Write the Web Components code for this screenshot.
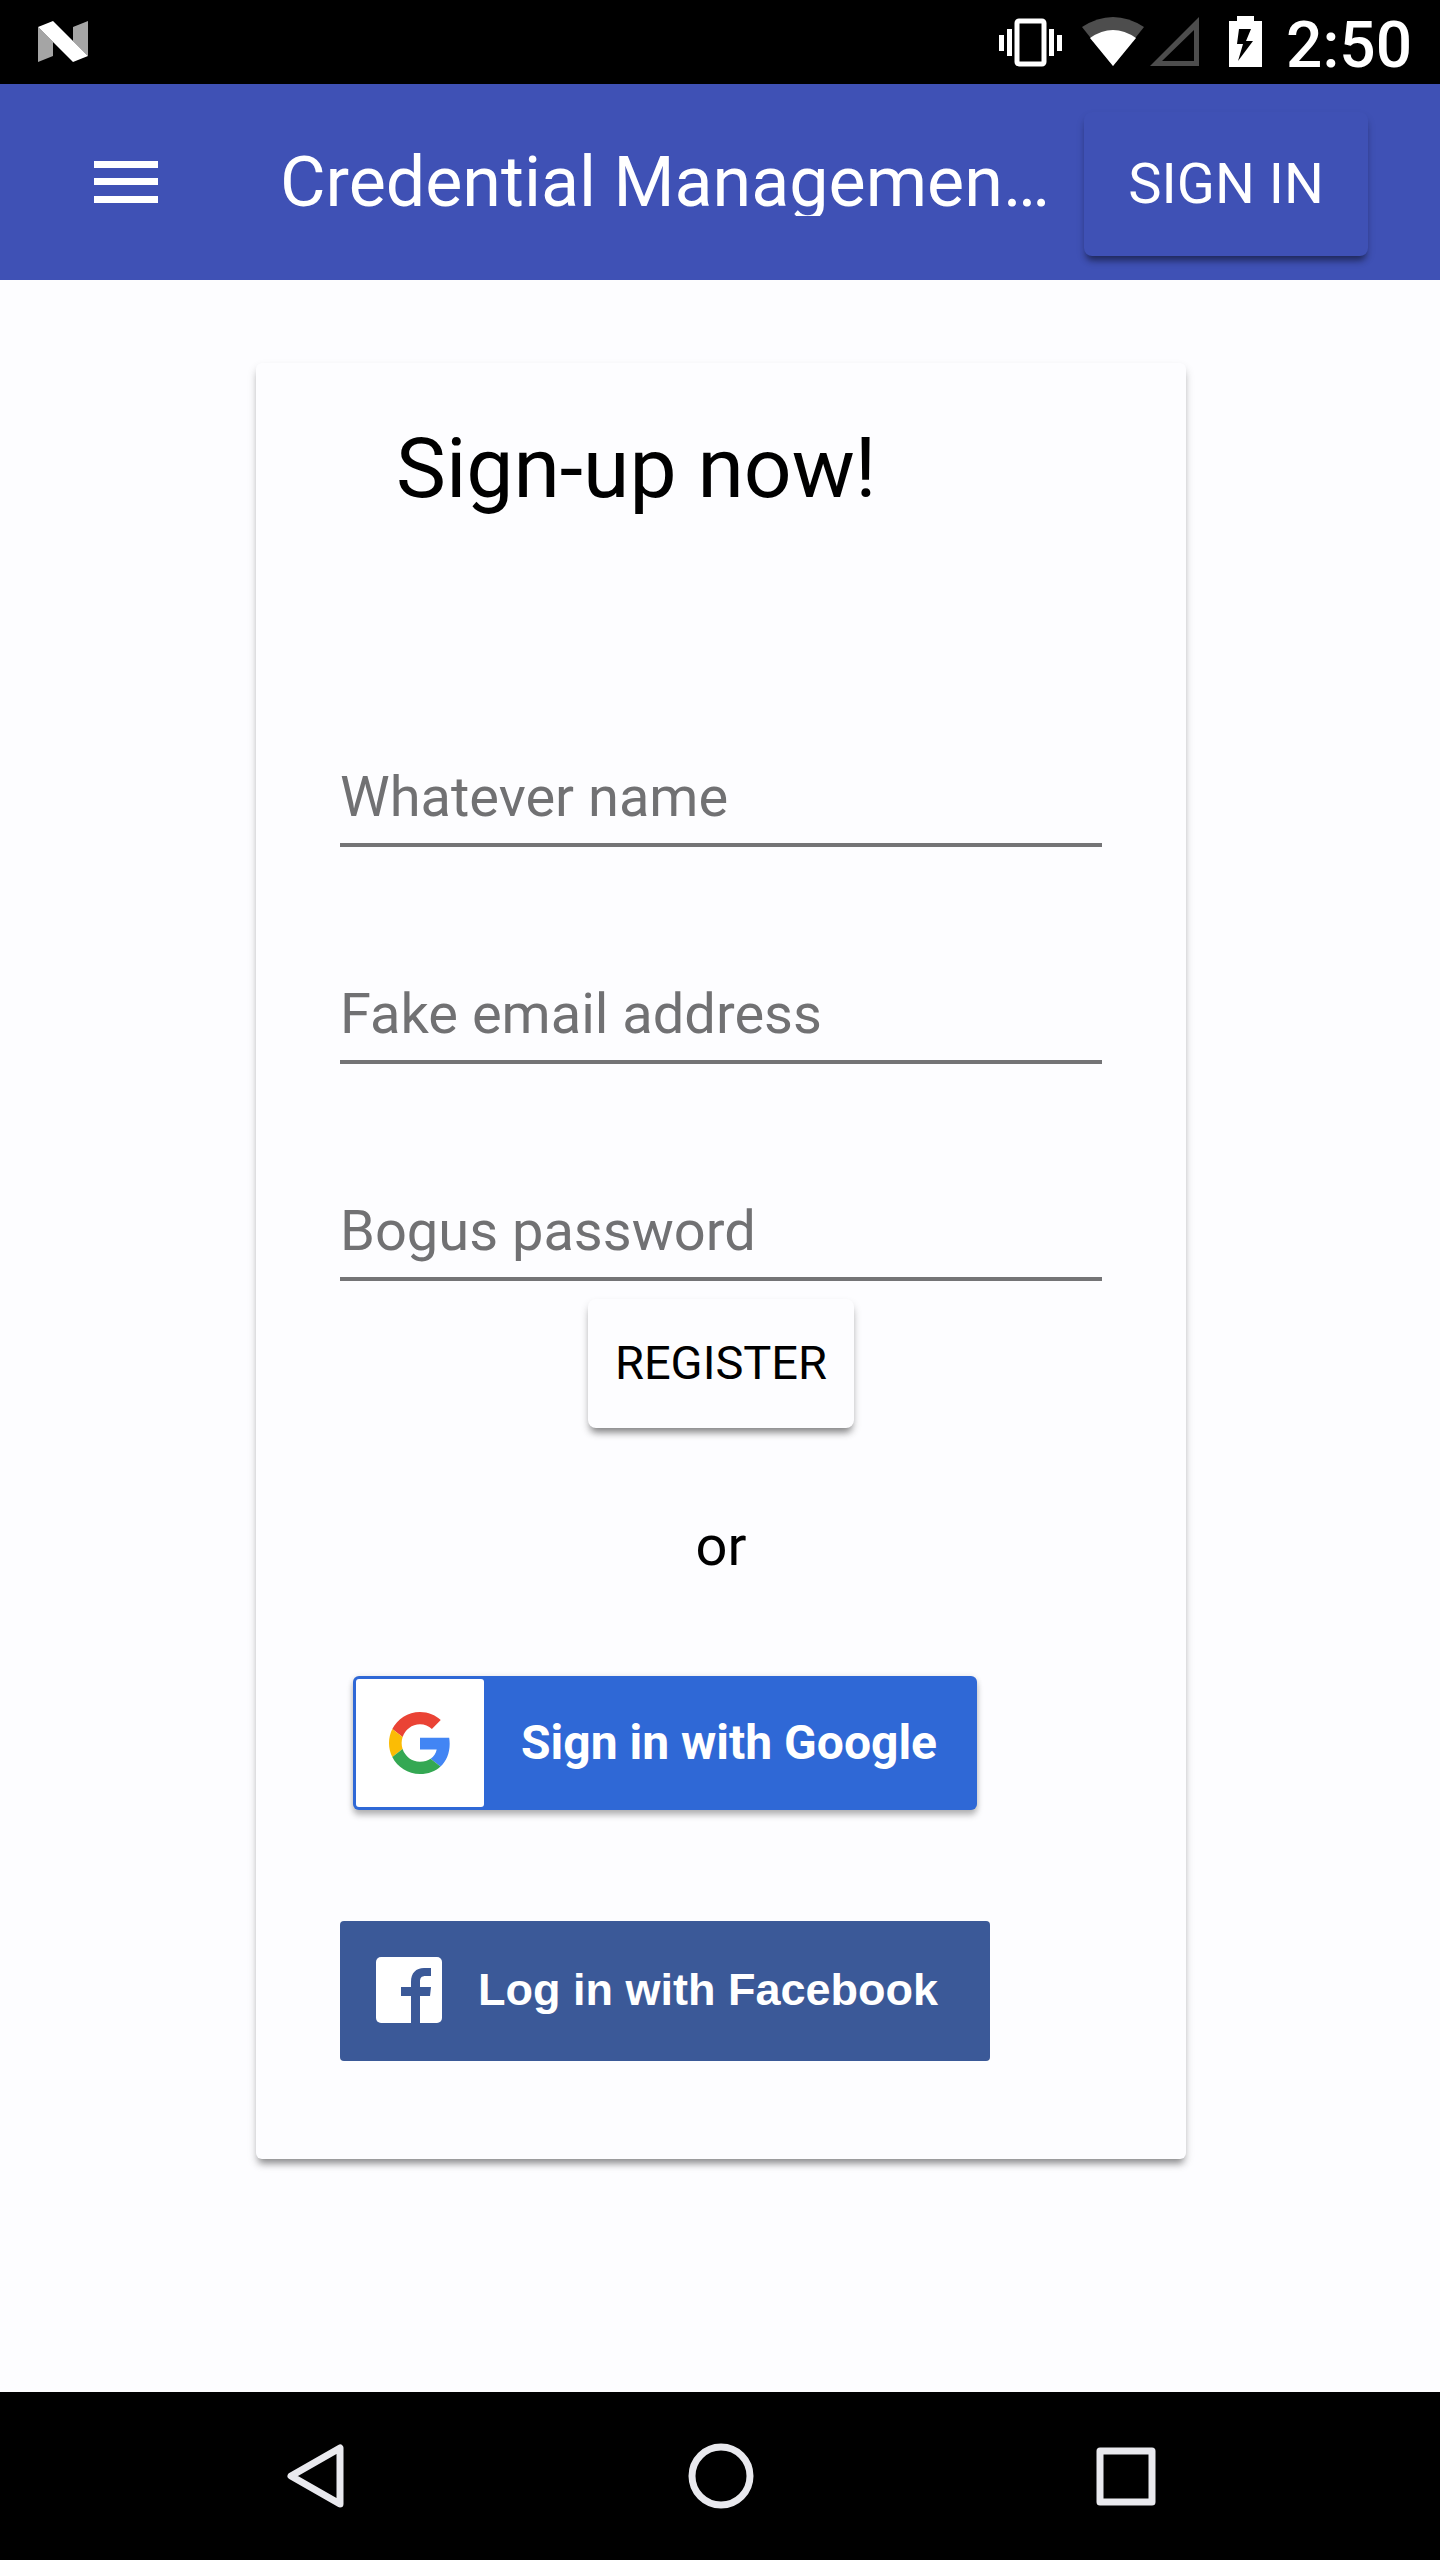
<!DOCTYPE html>
<html lang="en">
<head>
<meta charset="utf-8">
<meta name="viewport" content="width=device-width, initial-scale=1">
<title>Credential Management</title>
<style>
  html, body { margin: 0; }
  body { min-height: 100vh; display: flex; flex-direction: column; background: #fdfdff; color: #000; font-family: Roboto, "Liberation Sans", sans-serif; }
  main { flex: 1; padding: 83px 254px 84px 256px; }
</style>
</head>
<body>
<status-bar time="2:50"></status-bar>
<app-bar heading="Credential Managemen…">
  <raised-button slot="action" variant="bar">SIGN IN</raised-button>
</app-bar>
<main>
  <signup-card heading="Sign-up now!">
    <text-field type="text" name="name" placeholder="Whatever name"></text-field>
    <text-field type="email" name="email" placeholder="Fake email address"></text-field>
    <text-field type="password" name="password" placeholder="Bogus password"></text-field>
    <raised-button slot="submit">REGISTER</raised-button>
    <google-button slot="social">Sign in with Google</google-button>
    <facebook-button slot="social">Log in with Facebook</facebook-button>
  </signup-card>
</main>
<nav-bar></nav-bar>

<script>
const define = (name, html, setup) => customElements.define(name, class extends HTMLElement {
  connectedCallback() {
    if (this.shadowRoot) return;
    const template = document.createElement('template');
    template.innerHTML = html;
    this.attachShadow({ mode: 'open' }).append(template.content.cloneNode(true));
    if (setup) setup(this, this.shadowRoot);
  }
});

define('status-bar', `
<style>
  :host { display: flex; align-items: center; justify-content: space-between; height: 84px; padding: 0 28px 0 38px; background: #000; color: #fff; }
  .tray { display: flex; align-items: center; }
  svg { display: block; height: 84px; }
  time { font-size: 64px; line-height: 76px; font-weight: 500; padding-left: 12px; padding-top: 8px; }
</style>
<svg width="50" viewBox="0 0 50 84" aria-label="Android N">
  <path fill="#a5a5a5" d="M0 27l15 15v14L0 62zM35 27l15-6v35L35 41z"/>
  <path fill="#fff" d="M0 27l15-6 35 35-15 6z"/>
</svg>
<div class="tray">
  <svg width="83" viewBox="995 0 83 84" aria-label="Vibrate">
    <g fill="#fff"><path d="M999 35h5v16h-5zM1007 29h5v27h-5zM1049 29h5v27h-5zM1057 35h5v16h-5z"/></g>
    <rect x="1017" y="21" width="27" height="43" rx="2" fill="none" stroke="#fff" stroke-width="5"/>
  </svg>
  <svg width="70" viewBox="1078 0 70 84" aria-label="Wi-Fi">
    <path fill="#4d4d4d" d="M1082 27Q1113 7 1144 27L1113 66z"/>
    <path fill="#fff" d="M1090 38Q1113 22 1136 38L1113 66z"/>
  </svg>
  <svg width="70" viewBox="1148 0 70 84" aria-label="No signal">
    <path fill="#4d4d4d" fill-rule="evenodd" d="M1199 17v49h-49zM1194 30l-32 31h32z"/>
  </svg>
  <svg width="56" viewBox="1218 0 56 84" aria-label="Charging">
    <path fill="#fff" fill-rule="evenodd" d="M1237 16h17v5h8v46h-33V21h8zM1239 29l-2 15h6l-5 17 15-20h-7l5-12z"/>
  </svg>
  <time></time>
</div>`, (host, root) => { root.querySelector('time').textContent = host.getAttribute('time'); });

define('app-bar', `
<style>
  :host { display: flex; align-items: center; height: 196px; box-sizing: border-box; padding: 0 72px 0 84px; background: #3f51b5; color: #fff; }
  .menu { width: 84px; height: 84px; margin-right: 112px; padding: 0; border: 0; background: none; }
  .menu svg { display: block; }
  h1 { flex: 1; min-width: 0; margin: 0; font-size: 70px; line-height: 68px; font-weight: 400; white-space: nowrap; overflow: hidden; }
  slot { display: block; padding-top: 4px; }
</style>
<button class="menu" aria-label="Menu">
  <svg width="84" height="84" viewBox="0 0 84 84" fill="#fff"><path d="M10 21h64v7H10zM10 38h64v7H10zM10 56h64v7H10z"/></svg>
</button>
<h1></h1>
<slot name="action"></slot>`, (host, root) => { root.querySelector('h1').textContent = host.getAttribute('heading'); });

define('raised-button', `
<style>
  :host { display: block; }
  button { display: block; height: 129px; padding: 0 27px 2px; border: 0; border-radius: 8px; background: #fdfdff; color: #000; font: 400 47px/54px Roboto, sans-serif; box-shadow: 0 7px 7px -3px rgba(0,0,0,.38), 0 5px 8px rgba(0,0,0,.16); }
  :host([variant=bar]) button { height: 144px; padding: 0 44px; background: #3f51b5; color: #fff; font-size: 56px; box-shadow: 0 7px 6px -3px rgba(0,0,0,.42), 0 5px 8px rgba(0,0,0,.14); }
</style>
<button><slot></slot></button>`);

define('signup-card', `
<style>
  :host { display: block; padding: 56px 84px 98px; border-radius: 6px; background: #fdfdff; box-shadow: 0 7px 7px -3px rgba(0,0,0,.36), 0 5px 10px rgba(0,0,0,.15); }
  h2 { margin: 0 56px 242px; font-size: 84px; line-height: 100px; font-weight: 400; }
  .fields { display: flex; flex-direction: column; gap: 131px; }
  .submit { display: flex; justify-content: center; margin: 18px 0 82px; }
  p { margin: 0 0 94px; text-align: center; font-size: 56px; line-height: 72px; }
  .social { display: flex; flex-direction: column; align-items: flex-start; gap: 111px; }
</style>
<h2></h2>
<form>
  <div class="fields"><slot></slot></div>
  <div class="submit"><slot name="submit"></slot></div>
</form>
<p>or</p>
<div class="social"><slot name="social"></slot></div>`, (host, root) => { root.querySelector('h2').textContent = host.getAttribute('heading'); });

define('text-field', `
<style>
  :host { display: block; }
  input { display: block; box-sizing: border-box; width: 100%; height: 86px; margin: 0; padding: 0 0 10px; border: 0; border-bottom: 4px solid #747476; border-radius: 0; background: none; color: #000; outline: 0; font: 400 56px/72px Roboto, sans-serif; }
  input::placeholder { color: #717173; opacity: 1; }
</style>
<input>`, (host, root) => {
  const input = root.querySelector('input');
  for (const key of ['type', 'name', 'placeholder']) input.setAttribute(key, host.getAttribute(key));
  input.setAttribute('aria-label', host.getAttribute('placeholder'));
});

define('google-button', `
<style>
  :host { display: block; margin-left: 13px; }
  button { display: flex; align-items: center; height: 134px; padding: 3px 40px 3px 3px; border: 0; border-radius: 6px; background: #2f68d6; color: #fff; font: 700 48px/56px Roboto, sans-serif; box-shadow: 0 5px 6px rgba(0,0,0,.28), 0 0 6px rgba(0,0,0,.08); }
  .mark { display: flex; align-items: center; justify-content: center; width: 128px; height: 128px; margin-right: 37px; border-radius: 3px; background: #fff; }
</style>
<button>
  <span class="mark"><svg width="62" height="62" viewBox="0 0 48 48">
    <path fill="#EA4335" d="M24 9.500c3.540 0 6.710 1.220 9.210 3.600l6.850-6.850C35.900 2.380 30.470 0 24 0 14.620 0 6.510 5.380 2.560 13.220l7.980 6.190C12.430 13.720 17.740 9.500 24 9.500z"/>
    <path fill="#4285F4" d="M46.980 24.550c0-1.570-.15-3.090-.38-4.550H24v9.020h12.940c-.58 2.960-2.260 5.480-4.780 7.180l7.730 6c4.510-4.180 7.090-10.360 7.090-17.650z"/>
    <path fill="#FBBC05" d="M10.530 28.590c-.48-1.450-.76-2.990-.76-4.590s.27-3.140.76-4.590l-7.980-6.190C.92 16.460 0 20.120 0 24c0 3.880.92 7.540 2.560 10.780l7.970-6.190z"/>
    <path fill="#34A853" d="M24 48c6.480 0 11.930-2.130 15.890-5.810l-7.730-6c-2.150 1.450-4.920 2.300-8.160 2.300-6.260 0-11.570-4.220-13.470-9.910l-7.980 6.190C6.510 42.620 14.620 48 24 48z"/>
  </svg></span>
  <slot></slot>
</button>`);

define('facebook-button', `
<style>
  :host { display: block; }
  button { display: flex; align-items: center; height: 140px; padding: 0 52px 2px 36px; border: 0; border-radius: 4px; background: #3b5998; color: #fff; font: 700 45px/56px "Liberation Sans", Arial, sans-serif; }
  svg { margin-right: 36px; }
</style>
<button>
  <svg width="66" height="66" viewBox="0 0 66 66">
    <rect width="66" height="66" rx="5" fill="#fff"/>
    <path fill="#3b5998" d="M35 66V39H25v-9h10v-5c0-9 5-14 13-14h7v8h-5c-5 0-6 2-6 6v5h11l-1 9H44v27z"/>
  </svg>
  <slot></slot>
</button>`);

define('nav-bar', `
<style>
  :host { display: flex; align-items: center; justify-content: space-between; height: 168px; padding: 0 272px 0 274px; background: #000; }
  button { padding: 0; border: 0; background: none; }
  svg { display: block; fill: none; stroke: #e9e9ee; stroke-width: 7; stroke-linejoin: round; }
</style>
<button aria-label="Back"><svg width="84" height="84" viewBox="0 0 84 84"><path d="M66 14v56L17 42z"/></svg></button>
<button aria-label="Home"><svg width="84" height="84" viewBox="0 0 84 84"><circle cx="42" cy="42" r="29"/></svg></button>
<button aria-label="Recent apps"><svg width="84" height="84" viewBox="0 0 84 84"><rect x="16" y="17" width="52" height="51"/></svg></button>`);
</script>
</body>
</html>
